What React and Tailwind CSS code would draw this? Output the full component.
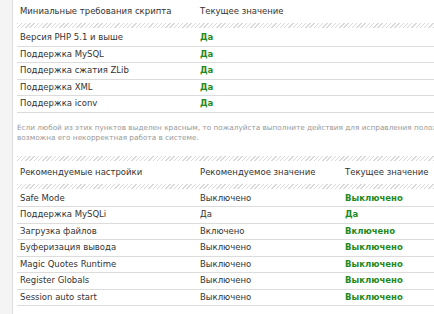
const hatch =
  'h-[5px] bg-[repeating-linear-gradient(135deg,#d9d9d9_0px,#d9d9d9_1px,#ffffff_1px,#ffffff_3px)]';

const required = [
  ['Версия PHP 5.1 и выше', 'Да'],
  ['Поддержка MySQL', 'Да'],
  ['Поддержка сжатия ZLib', 'Да'],
  ['Поддержка XML', 'Да'],
  ['Поддержка iconv', 'Да'],
];

const recommended = [
  ['Safe Mode', 'Выключено', 'Выключено'],
  ['Поддержка MySQLi', 'Да', 'Да'],
  ['Загрузка файлов', 'Включено', 'Включено'],
  ['Буферизация вывода', 'Выключено', 'Выключено'],
  ['Magic Quotes Runtime', 'Выключено', 'Выключено'],
  ['Register Globals', 'Выключено', 'Выключено'],
  ['Session auto start', 'Выключено', 'Выключено'],
];

export default function App() {
  return (
    <div className="w-[434px] h-[314px] overflow-hidden bg-white flex font-['DejaVu_Sans',sans-serif] text-[8.5px] text-[#333]">
      <div className="w-[13px] shrink-0 bg-[#f4f4f4] border-r border-[#dedede]" />
      <div className="w-[560px] shrink-0 pl-[4px]">
        <div className="h-[23px] flex items-center px-[3px]">
          <div className="w-[180px]">Миниальные требования скрипта</div>
          <div>Текущее значение</div>
        </div>
        <div className={hatch} />
        <div className="h-[2px]" />
        {required.map(([name, val]) => (
          <div key={name} className="h-[16.5px] flex items-center px-[3px] border-b border-[#dcdcdc]">
            <div className="w-[180px]">{name}</div>
            <div className="font-bold text-[#1f8a1f]">{val}</div>
          </div>
        ))}

        <div className="pt-[10px] pb-[13px] text-[7.3px] leading-[10px] text-[#9a9a9a] whitespace-nowrap">
          <p>Если любой из этих пунктов выделен красным, то пожалуйста выполните действия для исправления положения. В случае неудачи</p>
          <p>возможна его некорректная работа в системе.</p>
        </div>

        <div className={hatch} />
        <div className="h-[23px] flex items-center px-[3px]">
          <div className="w-[180px]">Рекомендуемые настройки</div>
          <div className="w-[145px]">Рекомендуемое значение</div>
          <div>Текущее значение</div>
        </div>
        <div className={hatch} />
        <div className="h-[2px]" />
        {recommended.map(([name, rec, cur]) => (
          <div key={name} className="h-[16.5px] flex items-center px-[3px] border-b border-[#dcdcdc]">
            <div className="w-[180px]">{name}</div>
            <div className="w-[145px]">{rec}</div>
            <div className="font-bold text-[#1f8a1f]">{cur}</div>
          </div>
        ))}
      </div>
    </div>
  );
}
